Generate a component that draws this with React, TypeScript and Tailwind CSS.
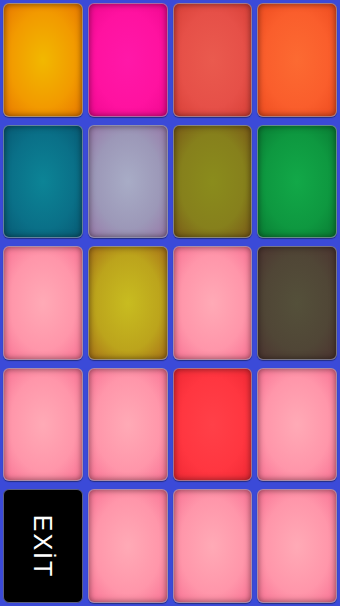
const pink = "bg-[radial-gradient(ellipse_at_center,#ffaab6_0%,#ff96aa_60%,#f87294_100%)]";

const pads = [
  "bg-[radial-gradient(ellipse_at_center,#f2b800_0%,#f29a00_60%,#e87800_100%)]",
  "bg-[radial-gradient(ellipse_at_center,#ff18a8_0%,#ff12a0_60%,#f00890_100%)]",
  "bg-[radial-gradient(ellipse_at_center,#ea5a4e_0%,#e65048_60%,#d84038_100%)]",
  "bg-[radial-gradient(ellipse_at_center,#fc6a32_0%,#fa5e2c_60%,#ee4c20_100%)]",
  "bg-[radial-gradient(ellipse_at_center,#0c8496_0%,#0a7088_60%,#085a74_100%)]",
  "bg-[radial-gradient(ellipse_at_center,#a8acc6_0%,#9c98b8_60%,#9878a8_100%)]",
  "bg-[radial-gradient(ellipse_at_center,#8a8c1c_0%,#86801c_60%,#7a5a18_100%)]",
  "bg-[radial-gradient(ellipse_at_center,#12a848_0%,#0e9840_60%,#0a7c34_100%)]",
  pink,
  "bg-[radial-gradient(ellipse_at_center,#c8bc20_0%,#bca41c_60%,#a87018_100%)]",
  pink,
  "bg-[radial-gradient(ellipse_at_center,#54503a_0%,#504636_60%,#4c3430_100%)]",
  pink,
  pink,
  "bg-[radial-gradient(ellipse_at_center,#ff4048_0%,#ff3640_60%,#f02834_100%)]",
  pink,
  "exit",
  pink,
  pink,
  pink,
];

export default function App() {
  return (
    <div className="w-[340px] h-[606px] bg-[#3b4ad8] p-[3px] grid grid-cols-4 grid-rows-5 gap-x-[5px] gap-y-[8px] font-['Liberation_Sans',sans-serif]">
      {pads.map((bg, i) =>
        bg === "exit" ? (
          <div
            key={i}
            className="rounded-[6px] bg-black border border-[#5a5f80] flex items-center justify-center"
          >
            <span className="rotate-90 text-white text-[25px] tracking-[2px] leading-none">
              EXİT
            </span>
          </div>
        ) : (
          <div
            key={i}
            className={`rounded-[6px] border border-[#8a8ea8]/70 shadow-[inset_0_0_6px_rgba(0,0,0,0.5),0_1px_1px_rgba(0,0,0,0.4)] ${bg}`}
          />
        )
      )}
    </div>
  );
}
